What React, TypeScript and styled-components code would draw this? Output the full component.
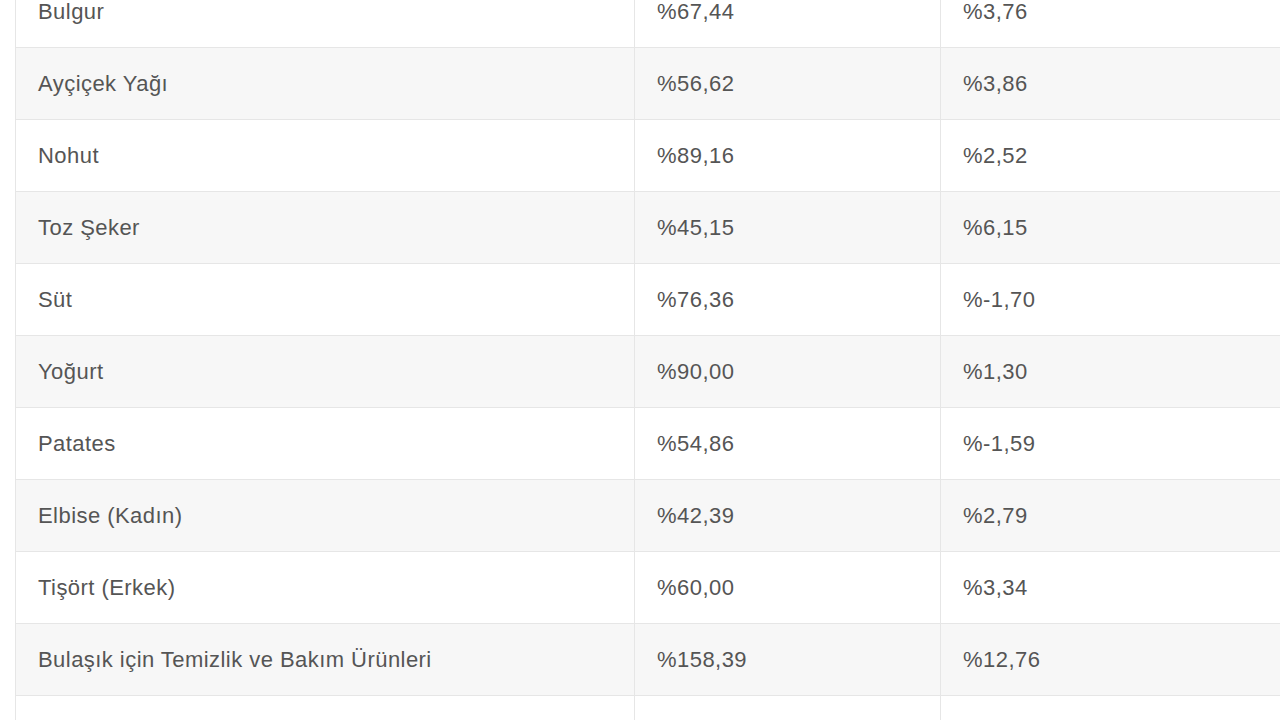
import React from "react";
import styled, { createGlobalStyle } from "styled-components";

const GlobalStyle = createGlobalStyle`
  html, body {
    margin: 0;
    padding: 0;
    background: #ffffff;
    overflow: hidden;
  }
`;

const Page = styled.div`
  width: 1280px;
  height: 720px;
  overflow: hidden;
  padding-left: 15px;
  box-sizing: border-box;
`;

const Table = styled.table`
  width: 1300px;
  margin-top: -25px;
  border-collapse: collapse;
  table-layout: fixed;
  font-family: "Liberation Sans", Arial, sans-serif;
  font-size: 22px;
  letter-spacing: 0.45px;
  color: #555555;
`;

const Row = styled.tr`
  &:nth-child(even) {
    background: #f7f7f7;
  }
`;

const Cell = styled.td<{ w: number }>`
  width: ${(props) => props.w}px;
  height: 72px;
  padding: 1px 0 0 22px;
  box-sizing: border-box;
  border: 1px solid #e6e6e6;
  vertical-align: middle;
  white-space: nowrap;
`;

type Item = {
  name: string;
  yearly: string;
  monthly: string;
};

const items: Item[] = [
  { name: "Bulgur", yearly: "%67,44", monthly: "%3,76" },
  { name: "Ayçiçek Yağı", yearly: "%56,62", monthly: "%3,86" },
  { name: "Nohut", yearly: "%89,16", monthly: "%2,52" },
  { name: "Toz Şeker", yearly: "%45,15", monthly: "%6,15" },
  { name: "Süt", yearly: "%76,36", monthly: "%-1,70" },
  { name: "Yoğurt", yearly: "%90,00", monthly: "%1,30" },
  { name: "Patates", yearly: "%54,86", monthly: "%-1,59" },
  { name: "Elbise (Kadın)", yearly: "%42,39", monthly: "%2,79" },
  { name: "Tişört (Erkek)", yearly: "%60,00", monthly: "%3,34" },
  { name: "Bulaşık için Temizlik ve Bakım Ürünleri", yearly: "%158,39", monthly: "%12,76" },
  { name: "Çamaşır Yıkama Ürünleri", yearly: "%96,12", monthly: "%4,05" },
];

const App = () => {
  return (
    <Page>
      <GlobalStyle />
      <Table>
        <tbody>
          {items.map((item) => (
            <Row key={item.name}>
              <Cell w={619}>{item.name}</Cell>
              <Cell w={306}>{item.yearly}</Cell>
              <Cell w={375}>{item.monthly}</Cell>
            </Row>
          ))}
        </tbody>
      </Table>
    </Page>
  );
};

export default App;
